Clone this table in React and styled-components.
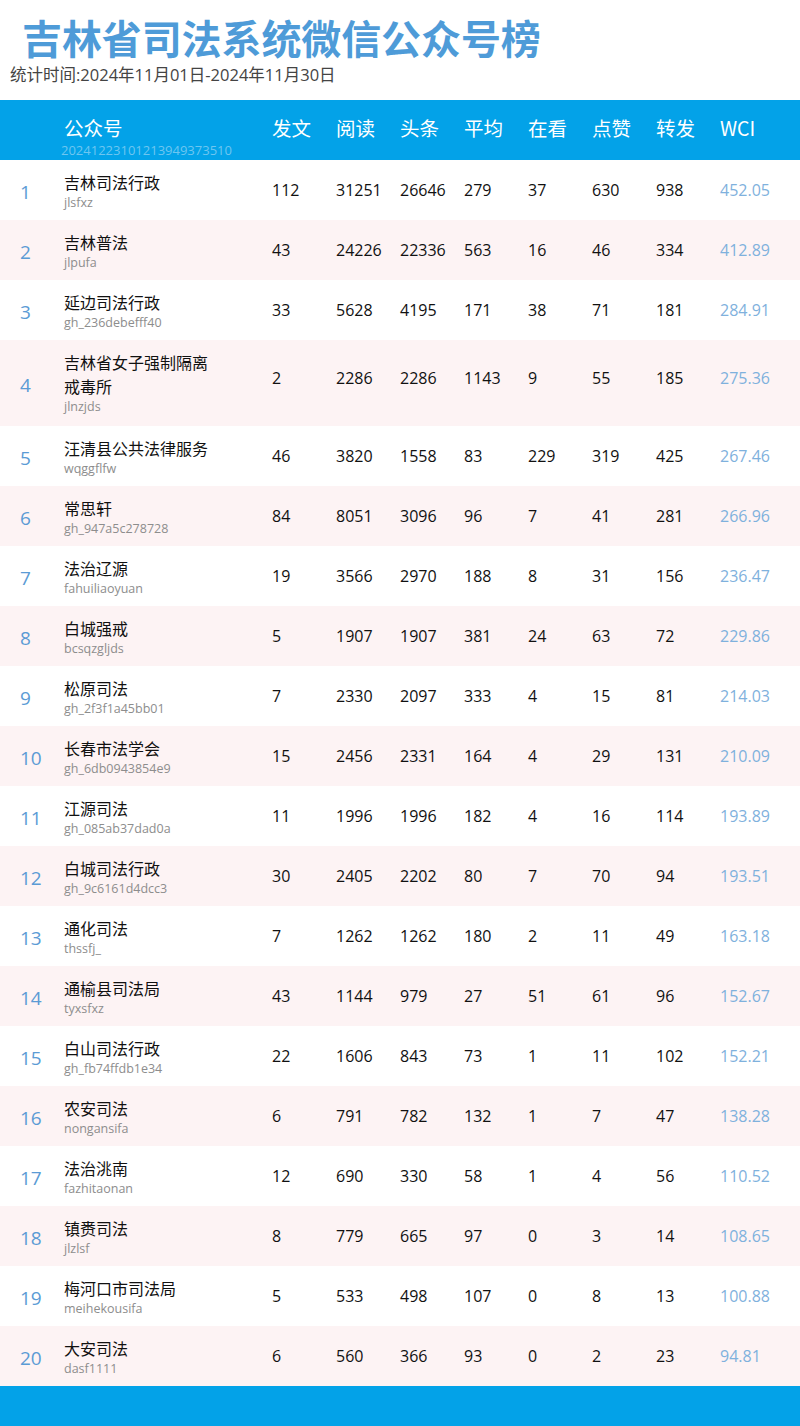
import React from "react"
import styled, { createGlobalStyle } from "styled-components"

const GlobalStyle = createGlobalStyle`
  body {
    margin: 0;
    background: #fff;
    font-family: "Open Sans", "Noto Sans CJK SC", sans-serif;
  }
`

const rows = [
  ["吉林司法行政", "jlsfxz", 112, 31251, 26646, 279, 37, 630, 938, "452.05"],
  ["吉林普法", "jlpufa", 43, 24226, 22336, 563, 16, 46, 334, "412.89"],
  ["延边司法行政", "gh_236debefff40", 33, 5628, 4195, 171, 38, 71, 181, "284.91"],
  ["吉林省女子强制隔离戒毒所", "jlnzjds", 2, 2286, 2286, 1143, 9, 55, 185, "275.36"],
  ["汪清县公共法律服务", "wqggflfw", 46, 3820, 1558, 83, 229, 319, 425, "267.46"],
  ["常思轩", "gh_947a5c278728", 84, 8051, 3096, 96, 7, 41, 281, "266.96"],
  ["法治辽源", "fahuiliaoyuan", 19, 3566, 2970, 188, 8, 31, 156, "236.47"],
  ["白城强戒", "bcsqzgljds", 5, 1907, 1907, 381, 24, 63, 72, "229.86"],
  ["松原司法", "gh_2f3f1a45bb01", 7, 2330, 2097, 333, 4, 15, 81, "214.03"],
  ["长春市法学会", "gh_6db0943854e9", 15, 2456, 2331, 164, 4, 29, 131, "210.09"],
  ["江源司法", "gh_085ab37dad0a", 11, 1996, 1996, 182, 4, 16, 114, "193.89"],
  ["白城司法行政", "gh_9c6161d4dcc3", 30, 2405, 2202, 80, 7, 70, 94, "193.51"],
  ["通化司法", "thssfj_", 7, 1262, 1262, 180, 2, 11, 49, "163.18"],
  ["通榆县司法局", "tyxsfxz", 43, 1144, 979, 27, 51, 61, 96, "152.67"],
  ["白山司法行政", "gh_fb74ffdb1e34", 22, 1606, 843, 73, 1, 11, 102, "152.21"],
  ["农安司法", "nongansifa", 6, 791, 782, 132, 1, 7, 47, "138.28"],
  ["法治洮南", "fazhitaonan", 12, 690, 330, 58, 1, 4, 56, "110.52"],
  ["镇赉司法", "jlzlsf", 8, 779, 665, 97, 0, 3, 14, "108.65"],
  ["梅河口市司法局", "meihekousifa", 5, 533, 498, 107, 0, 8, 13, "100.88"],
  ["大安司法", "dasf1111", 6, 560, 366, 93, 0, 2, 23, "94.81"],
]

const columns = ["发文", "阅读", "头条", "平均", "在看", "点赞", "转发", "WCI"]

const Page = styled.div`
  width: 800px;
  font-family: "Open Sans", "Noto Sans CJK SC", sans-serif;
`

const Heading = styled.div`
  height: 100px;
  padding: 17px 0 0 10px;
  box-sizing: border-box;
`

const Title = styled.h1`
  margin: 0 0 0 12px;
  font-family: "Noto Sans CJK SC", sans-serif;
  font-size: 40px;
  line-height: 40px;
  font-weight: 700;
  color: #4e9bd8;
  letter-spacing: -0.1px;
`

const Period = styled.div`
  font-family: "Open Sans", "Noto Sans CJK SC", sans-serif;
  font-size: 16.5px;
  line-height: 20px;
  margin-top: 8px;
  color: #444;
`

const Grid = styled.div`
  display: grid;
  grid-template-columns: 64px 208px repeat(8, 64px) 1fr;
  align-items: center;
`

const HeadBar = styled(Grid)`
  height: 60px;
  background: #03a2e8;
  color: #fff;
  align-items: start;
`

const HeadLabel = styled.div`
  font-family: "Noto Sans CJK SC", sans-serif;
  font-size: 19.5px;
  line-height: 22px;
  padding-top: ${p => (p.$flush ? "0" : "17px")};
`

const NameHead = styled.div`
  padding-top: 17px;
  grid-column: 2;
  white-space: nowrap;
`

const Stamp = styled.div`
  font-size: 13px;
  line-height: 16px;
  margin-top: 3px;
  color: #6ec6f0;
  margin-left: -3px;
`

const Row = styled(Grid)`
  min-height: 60px;
  background: ${p => (p.$odd ? "#fff" : "#fdf3f4")};
`

const Rank = styled.div`
  padding-left: 20px;
  padding-top: 4px;
  font-size: 19px;
  color: #5b9bd5;
`

const NameCell = styled.div`
  padding: 10px 0 ${p => (p.$tall ? "10px" : "8px")};
  width: 150px;
`

const Name = styled.div`
  font-family: "Noto Sans CJK SC", sans-serif;
  font-size: 16px;
  line-height: 24px;
  color: #111;
`

const Account = styled.div`
  font-size: 12.5px;
  line-height: 18px;
  color: #8d8d8d;
`

const Value = styled.div`
  font-size: 16px;
  color: ${p => (p.$wci ? "#7fb1dd" : "#111")};
  padding-bottom: ${p => (p.$tall ? "10px" : "1px")};
`

const Footer = styled.div`
  height: 40px;
  background: #03a2e8;
`

export default function App() {
  return (
    <Page>
      <GlobalStyle />
      <Heading>
        <Title>吉林省司法系统微信公众号榜</Title>
        <Period>统计时间:2024年11月01日-2024年11月30日</Period>
      </Heading>
      <HeadBar>
        <NameHead>
          <HeadLabel $flush>公众号</HeadLabel>
          <Stamp>20241223101213949373510</Stamp>
        </NameHead>
        {columns.map(c => (
          <HeadLabel key={c}>{c}</HeadLabel>
        ))}
      </HeadBar>
      {rows.map((r, i) => {
        const tall = r[0].length > 9
        return (
          <Row key={r[1]} $odd={i % 2 === 0}>
            <Rank>{i + 1}</Rank>
            <NameCell $tall={tall}>
              <Name>{r[0]}</Name>
              <Account>{r[1]}</Account>
            </NameCell>
            {r.slice(2).map((v, j) => (
              <Value key={j} $wci={j === 7} $tall={tall}>{v}</Value>
            ))}
          </Row>
        )
      })}
      <Footer />
    </Page>
  )
}
